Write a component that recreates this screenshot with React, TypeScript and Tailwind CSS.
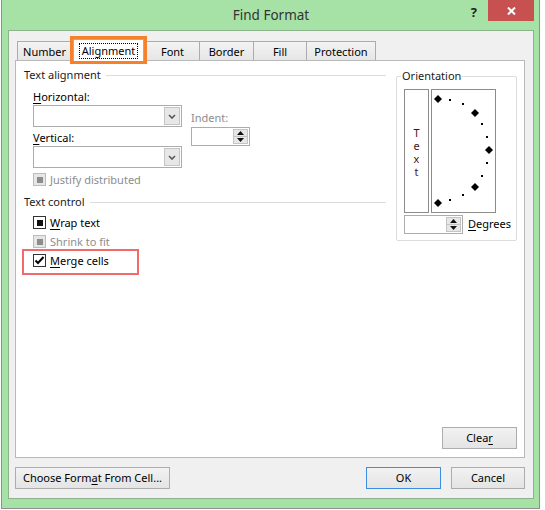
import type { ReactNode } from 'react'

type CheckState = 'mixed' | 'mixedDisabled' | 'checked'

function Key({ children }: { children: ReactNode }) {
  return <span className="underline underline-offset-[2px]">{children}</span>
}

function GroupHeader({ label }: { label: string }) {
  return (
    <div className="flex h-[16px] items-center">
      <span className="leading-[16px] text-[#1b1b1b]">{label}</span>
      <div className="ml-[5px] h-px flex-1 bg-[#dcdcdc]" />
    </div>
  )
}

function Combo() {
  return (
    <div className="flex h-[22px] w-[149px] border border-[#acacac] bg-white p-px">
      <div className="flex-1" />
      <div className="flex w-[16px] items-center justify-center border border-[#c4c4c4] bg-[#e7e7e7]">
        <svg width="8" height="5" viewBox="0 0 8 5">
          <path d="M1 1 L4 4 L7 1" fill="none" stroke="#555" strokeWidth="1.6" />
        </svg>
      </div>
    </div>
  )
}

function Spinner({ width }: { width: string }) {
  return (
    <div className={`flex h-[19px] ${width} border border-[#acacac] bg-white`}>
      <div className="flex-1" />
      <div className="m-px flex w-[15px] flex-col border border-[#c4c4c4] bg-[#e7e7e7]">
        <div className="flex flex-1 items-center justify-center border-b border-[#c4c4c4]">
          <svg width="7" height="4" viewBox="0 0 7 4">
            <path d="M0 4 L3.5 0 L7 4 Z" fill="#111" />
          </svg>
        </div>
        <div className="flex flex-1 items-center justify-center">
          <svg width="7" height="4" viewBox="0 0 7 4">
            <path d="M0 0 L3.5 4 L7 0 Z" fill="#111" />
          </svg>
        </div>
      </div>
    </div>
  )
}

function CheckBox({ state }: { state: CheckState }) {
  if (state === 'checked') {
    return (
      <div className="flex h-[13px] w-[13px] items-center justify-center border border-[#333] bg-white">
        <svg width="11" height="11" viewBox="0 0 11 11">
          <path d="M1.5 5.5 L4 8 L9.5 2" fill="none" stroke="#000" strokeWidth="2" />
        </svg>
      </div>
    )
  }
  const disabled = state === 'mixedDisabled'
  return (
    <div
      className={`flex h-[13px] w-[13px] items-center justify-center border ${
        disabled ? 'border-[#bcbcbc] bg-[#e6e6e6]' : 'border-[#333] bg-white'
      }`}
    >
      <div className={`h-[6px] w-[6px] ${disabled ? 'bg-[#8c8c8c]' : 'bg-[#111]'}`} />
    </div>
  )
}

function CheckRow({ state, children }: { state: CheckState; children: ReactNode }) {
  const disabled = state === 'mixedDisabled'
  return (
    <div className="flex h-[13px] items-center gap-[4px]">
      <CheckBox state={state} />
      <span className={`leading-[13px] ${disabled ? 'text-[#8d8d8d]' : 'text-black'}`}>{children}</span>
    </div>
  )
}

function Button({ children, width, primary }: { children: ReactNode; width: string; primary?: boolean }) {
  return (
    <div
      className={`flex h-[22px] ${width} items-center justify-center border bg-linear-to-b from-[#f2f2f2] to-[#e4e4e4] text-black ${
        primary ? 'border-[#3d8ee0]' : 'border-[#adadad]'
      }`}
    >
      {children}
    </div>
  )
}

// dial marks: big diamonds every 45°, small dots in between
const diamonds = [
  [7, 10],
  [44, 24],
  [58, 61],
  [44, 98],
  [7, 114],
]
const dots = [
  [19, 11],
  [32, 15],
  [51, 35],
  [56, 48],
  [56, 74],
  [51, 87],
  [32, 106],
  [19, 111],
]

function Dial() {
  return (
    <div className="h-[124px] w-[65px] border border-[#8c8c8c] bg-white">
      <svg width="63" height="122" viewBox="1 1 63 122">
        {diamonds.map(([x, y]) => (
          <path key={`${x}-${y}`} d={`M${x} ${y - 4} L${x + 4} ${y} L${x} ${y + 4} L${x - 4} ${y} Z`} fill="#000" />
        ))}
        {dots.map(([x, y]) => (
          <rect key={`${x}-${y}`} x={x - 1} y={y - 1} width="2" height="2" fill="#000" />
        ))}
      </svg>
    </div>
  )
}

function Orientation() {
  return (
    <div className="ml-[10px] w-[121px]">
      <div className="h-[165px] rounded-[2px] border border-[#dcdcdc]">
        <div className="-mt-[9px] ml-[4px] w-fit bg-white px-px leading-[16px] text-[#1b1b1b]">Orientation</div>
        <div className="ml-[7px] mt-[5px]">
          <div className="flex gap-[2px]">
            <div className="flex h-[124px] w-[25px] flex-col items-center justify-center border border-[#8c8c8c] pt-[2px] text-[#4a1414]">
              <span className="h-[13px] leading-[13px]">T</span>
              <span className="h-[13px] leading-[13px]">e</span>
              <span className="h-[13px] leading-[13px]">x</span>
              <span className="h-[13px] leading-[13px]">t</span>
            </div>
            <Dial />
          </div>
          <div className="mt-[2px] flex items-center gap-[5px]">
            <Spinner width="w-[59px]" />
            <span>
              <Key>D</Key>egrees
            </span>
          </div>
        </div>
      </div>
    </div>
  )
}

const tabs = [
  { label: 'Number', w: 'w-[55px]', ml: '' },
  { label: 'Alignment', w: 'w-[71px]', ml: 'ml-px', active: true },
  { label: 'Font', w: 'w-[55px]', ml: 'ml-px' },
  { label: 'Border', w: 'w-[55px]', ml: '-ml-px' },
  { label: 'Fill', w: 'w-[54px]', ml: '-ml-px' },
  { label: 'Protection', w: 'w-[70px]', ml: '-ml-px' },
]

function TabStrip() {
  return (
    <div className="ml-[2px] flex h-[21px] items-end">
      {tabs.map((t) =>
        t.active ? (
          <div
            key={t.label}
            className={`relative z-10 -mb-px flex h-[22px] ${t.w} ${t.ml} items-center justify-center border border-b-0 border-[#acacac] bg-white outline-[3px] outline-solid outline-[#f5822a]`}
          >
            <span className="border border-dotted border-black px-[2px] leading-[14px]">{t.label}</span>
          </div>
        ) : (
          <div
            key={t.label}
            className={`flex h-[19px] ${t.w} ${t.ml} items-center justify-center border border-b-0 border-[#acacac] bg-linear-to-b from-[#f3f3f3] to-[#e6e6e6] pt-[2px]`}
          >
            {t.label}
          </div>
        )
      )}
    </div>
  )
}

function AlignmentPanel() {
  return (
    <div className="flex h-[398px] flex-col border border-[#b9b9b9] bg-white">
      <div className="flex items-start pl-[8px] pt-[6px]">
        <div className="w-[362px]">
          <GroupHeader label="Text alignment" />
          <div className="flex gap-[9px] pl-[9px]">
            <div className="flex flex-col">
              <span className="mt-[6px] h-[15px] leading-[15px]">
                <Key>H</Key>orizontal:
              </span>
              <div className="mt-px">
                <Combo />
              </div>
              <span className="mt-[3px] h-[15px] leading-[15px]">
                <Key>V</Key>ertical:
              </span>
              <div className="mt-px">
                <Combo />
              </div>
            </div>
            <div className="flex flex-col">
              <span className="mt-[27px] h-[15px] leading-[15px] text-[#8d8d8d]">Indent:</span>
              <div className="mt-[2px]">
                <Spinner width="w-[59px]" />
              </div>
            </div>
          </div>
          <div className="mt-[5px] pl-[9px]">
            <CheckRow state="mixedDisabled">Justify distributed</CheckRow>
          </div>

          <div className="mt-[8px]">
            <GroupHeader label="Text control" />
          </div>
          <div className="flex flex-col gap-[6px] pl-[9px] pt-[6px]">
            <CheckRow state="mixed">
              <Key>W</Key>rap text
            </CheckRow>
            <CheckRow state="mixedDisabled">Shrink to fit</CheckRow>
            <div className="relative">
              <CheckRow state="checked">
                <Key>M</Key>erge cells
              </CheckRow>
              <div className="absolute -left-[11px] -top-[5px] h-[26px] w-[117px] border-2 border-[#f26a6a]" />
            </div>
          </div>
        </div>

        <div className="mt-[9px]">
          <Orientation />
        </div>
      </div>

      <div className="flex-1" />
      <div className="flex justify-end pb-[8px] pr-[7px]">
        <Button width="w-[75px]">
          Clea<Key>r</Key>
        </Button>
      </div>
    </div>
  )
}

export default function App() {
  return (
    <div className="h-[510px] w-[545px] overflow-hidden bg-white font-['Segoe_UI','Noto_Sans',sans-serif] text-[11px] text-black">
      <div className="ml-px flex h-[509px] w-[539px] flex-col border-x border-b border-[#8f8f8f] bg-[#a6e2a6] pb-[9px] pl-[6px] pr-[5px]">
        {/* title bar */}
        <div className="relative flex h-[30px] shrink-0 items-center justify-center">
          <span className="text-[13.5px] text-[#333]">Find Format</span>
          <span className="absolute right-[57px] top-[3px] text-[13px] font-bold text-[#222]">?</span>
          <div className="absolute right-0 top-0 flex h-[21px] w-[46px] items-center justify-center bg-[#c75050]">
            <svg width="9" height="8" viewBox="0 0 9 8">
              <path d="M1 0.5 L8 7.5 M8 0.5 L1 7.5" stroke="#fff" strokeWidth="2" />
            </svg>
          </div>
        </div>

        {/* client area */}
        <div className="flex flex-1 flex-col border border-[#8cb38c] bg-[#f0f0f0] pl-[6px] pr-[8px] pt-[8px]">
          <TabStrip />
          <AlignmentPanel />
          <div className="mt-[9px] flex gap-[10px]">
            <Button width="w-[155px]">
              Choose Form<Key>a</Key>t From Cell...
            </Button>
            <div className="flex-1" />
            <Button width="w-[75px]" primary>
              OK
            </Button>
            <Button width="w-[74px]">Cancel</Button>
          </div>
        </div>
      </div>
    </div>
  )
}
